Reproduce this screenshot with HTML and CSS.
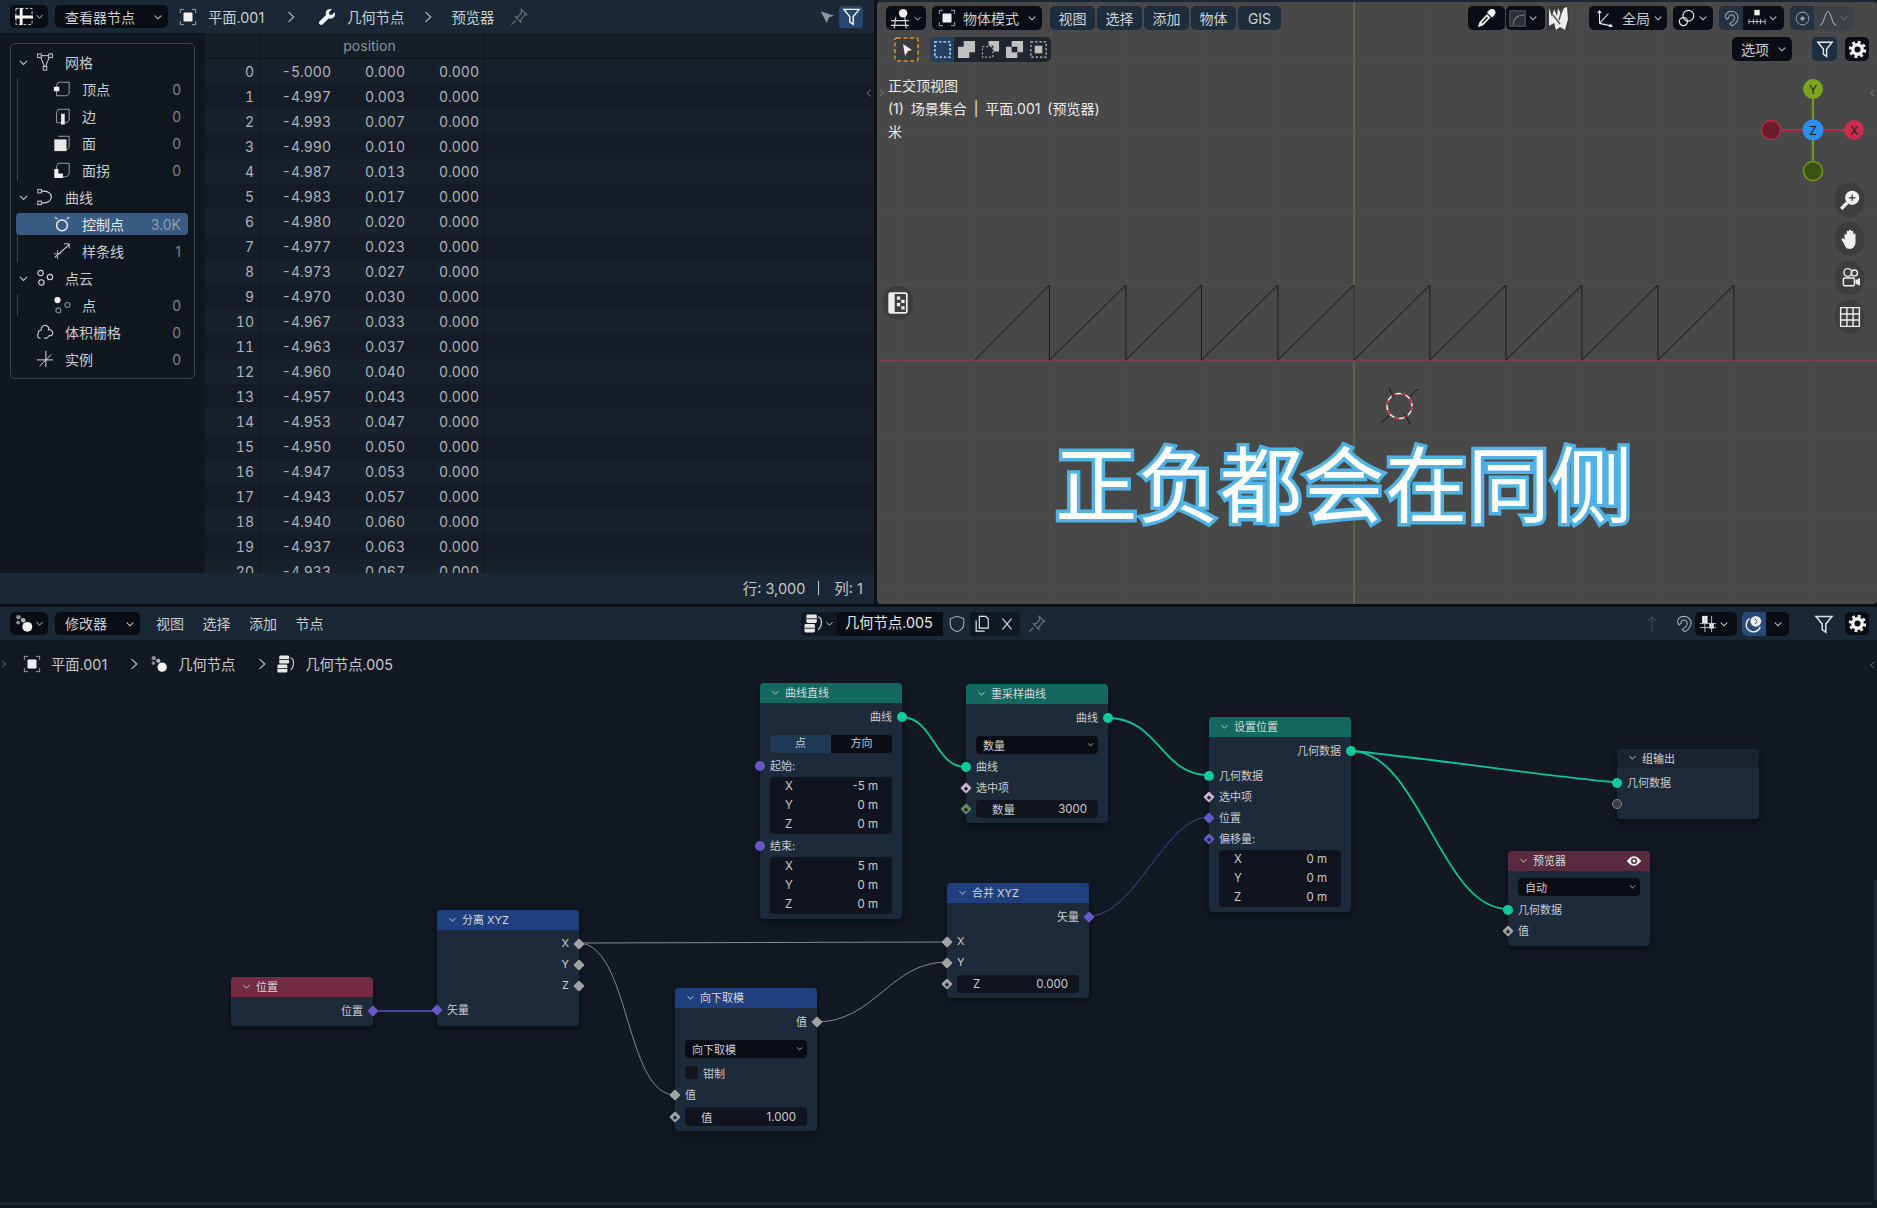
FILE: index.html
```html
<!doctype html>
<html lang="zh-CN">
<head>
  <meta charset="UTF-8" />
  <title>Geometry Nodes</title>
  <link rel="stylesheet" href="styles.css">
</head>
<body>
<svg class="defs" width="0" height="0" aria-hidden="true">
  <defs>
    <symbol id="i-chev" viewBox="0 0 20 20"><path d="M4.5 7.5l5.5 5.5 5.5-5.5" fill="none" stroke="currentColor" stroke-width="1.7"/></symbol>
    <symbol id="i-right" viewBox="0 0 20 20"><path d="M6.5 3l7.5 7-7.5 7" fill="none" stroke="currentColor" stroke-width="1.5"/></symbol>
    <symbol id="i-left" viewBox="0 0 20 20"><path d="M13.5 3L6 10l7.5 7" fill="none" stroke="currentColor" stroke-width="1.5"/></symbol>
    <symbol id="i-object" viewBox="0 0 20 20"><path d="M1.5 5.5v-4h4M14.5 1.5h4v4M18.5 14.5v4h-4M5.5 18.5h-4v-4" fill="none" stroke="#aeb3b8" stroke-width="1"/><rect x="5" y="5" width="10" height="10" rx="1" fill="#eceef0"/></symbol>
    <symbol id="i-wrench" viewBox="0 0 20 20"><path fill="#f0f0f0" d="M18.6 4.6l-3.3 3.2-2.6-.6-.6-2.6L15.4 1.4c-2.5-.8-5.2.1-6.3 2.3-.7 1.4-.7 2.9-.2 4.2L1.8 14.6c-1 1-1 2.5 0 3.5s2.5 1 3.5 0l6.9-6.6c1.4.5 3 .4 4.3-.4 2.2-1.3 3-4.1 2.1-6.5z"/></symbol>
    <symbol id="i-pin" viewBox="0 0 20 20"><path d="M12.5 1.5l6 6-2.5.5-3.5 4.5-.5 3.5-6-6 3.5-.5L13 5zM6 14l-4.5 4.5" fill="none" stroke="currentColor" stroke-width="1.2"/></symbol>
    <symbol id="i-filter" viewBox="0 0 20 20"><path d="M2 2.5h16l-6.2 7.6v8.2l-3.6-2.6v-5.6z" fill="none" stroke="currentColor" stroke-width="1.5"/></symbol>
    <symbol id="i-gear" viewBox="0 0 20 20"><circle cx="10" cy="10" r="5" fill="none" stroke="currentColor" stroke-width="3.6"/><circle cx="10" cy="10" r="7.6" fill="none" stroke="currentColor" stroke-width="3.2" stroke-dasharray="3 2.97"/></symbol>
    <symbol id="i-dots" viewBox="0 0 20 20"><circle cx="4.2" cy="3.5" r="2.4" fill="#8d9196"/><circle cx="9.2" cy="6.5" r="2.4" fill="#b5b8bc"/><circle cx="3.8" cy="9" r="2" fill="#8d9196"/><circle cx="13.5" cy="13.5" r="5.2" fill="#f0f0f0"/></symbol>
    <symbol id="i-group" viewBox="0 0 20 20"><rect x="2.500" y="0.500" width="11" height="9" rx="1.500" fill="#e8e8e8"/><rect x="0.500" y="10.500" width="11" height="9" rx="1.500" fill="#e8e8e8"/><path d="M2.500 5h11M0.500 15h11" stroke="#1a2533" stroke-width="1"/><path d="M15 3c4.500 1 4.500 10 0 13.500" fill="none" stroke="#d0d0d0" stroke-width="1.300"/></symbol>
    <symbol id="i-sheet" viewBox="0 0 20 20"><path d="M1.5 1.500h17v17h-17z" fill="none" stroke="#d5d5d5" stroke-width="1" stroke-dasharray="3 2"/><path d="M0.500 10.500h19M7 1v18" stroke="#f4f4f4" stroke-width="3"/></symbol>
    <symbol id="i-mesh" viewBox="0 0 20 20"><path d="M4.500 3h11L10 16.500z" fill="none" stroke="#d8dadc" stroke-width="1.100"/><g fill="#11171e" stroke="#d8dadc"><rect x="1.800" y="1" width="4" height="4"/><rect x="14.200" y="1" width="4" height="4"/><rect x="8" y="15" width="4" height="4"/></g></symbol>
    <symbol id="i-vert" viewBox="0 0 20 20"><path d="M6 2.500h12v11c0 2-2 4-4 4H4V6z" fill="none" stroke="#a8acb0"/><rect x="1" y="7.500" width="6" height="5" fill="#f0f0f0"/></symbol>
    <symbol id="i-edge" viewBox="0 0 20 20"><path d="M6 2.500h12v11c0 2-2 4-4 4H4V6z" fill="none" stroke="#a8acb0"/><rect x="9" y="7.500" width="4" height="12" fill="#f0f0f0"/></symbol>
    <symbol id="i-face" viewBox="0 0 20 20"><path d="M6 2.500h12v11c0 2-2 4-4 4" fill="none" stroke="#a8acb0"/><rect x="1.500" y="6" width="13.500" height="13" fill="#e8e8e8"/></symbol>
    <symbol id="i-corner" viewBox="0 0 20 20"><path d="M6 2.500h12v11c0 2-2 4-4 4H4V6z" fill="none" stroke="#a8acb0"/><path d="M1.500 9h4.500v5h5v5H1.500z" fill="#f0f0f0"/></symbol>
    <symbol id="i-curve" viewBox="0 0 20 20"><path d="M6 3.500h3c5 0 8 3 8 6.500s-3 6.500-8 6.500H6" fill="none" stroke="#d8dadc" stroke-width="1.200"/><g fill="#11171e" stroke="#d8dadc"><rect x="2" y="1.500" width="4" height="4"/><rect x="2" y="14.500" width="4" height="4"/></g></symbol>
    <symbol id="i-ctrl" viewBox="0 0 20 20"><circle cx="10" cy="11.500" r="6" fill="none" stroke="#eceef0" stroke-width="1.600"/><path d="M2 2.500l3 2M18 2.500l-3 2" stroke="#aeb4ba" stroke-width="1.800"/></symbol>
    <symbol id="i-spline" viewBox="0 0 20 20"><path d="M2 17L18 3" stroke="#d8dadc" stroke-width="1.200"/><path d="M12 2h6v5" fill="none" stroke="#d8dadc"/><path d="M5 9v10M1 13h8" stroke="#b0b4b8" stroke-width="1"/></symbol>
    <symbol id="i-cloud" viewBox="0 0 20 20"><g fill="none" stroke="#d8dadc" stroke-width="1.200"><circle cx="5" cy="4.500" r="3"/><circle cx="15.500" cy="9" r="3"/><circle cx="6" cy="15" r="3"/></g></symbol>
    <symbol id="i-point" viewBox="0 0 20 20"><circle cx="5" cy="4.500" r="3.500" fill="#f0f0f0"/><g fill="none" stroke="#8a8e92" stroke-width="1.200"><circle cx="16" cy="10" r="2.800"/><circle cx="6" cy="16" r="2.800"/></g></symbol>
    <symbol id="i-volume" viewBox="0 0 20 20"><path d="M5 17c-3 0-4-3-2.500-5C2 9 4 8 5.500 8 5.500 4 9 1.500 12 3c2 1 2.500 3 2 4.500 3-.5 5 1.500 4.500 4.500-.5 2-2.500 2.500-4 2-1 2.500-3.500 3.500-5.500 2.500" fill="none" stroke="#d8dadc" stroke-width="1.200"/></symbol>
    <symbol id="i-instance" viewBox="0 0 20 20"><path d="M11 1v18M1 11h18M4 18L17 5" fill="none" stroke="#d8dadc" stroke-width="1.100"/></symbol>
    <symbol id="i-view3d" viewBox="0 0 20 20"><circle cx="12.500" cy="5" r="4" fill="#f0f0f0"/><path d="M1 12h17M1 16.500h17M5.500 9L4 19.500M14 9l1.500 10.500" fill="none" stroke="#d8d8d8" stroke-width="1.100"/></symbol>
    <symbol id="i-dropper" viewBox="0 0 20 20"><path d="M11 3.500C13 .5 16 .5 17.500 2s1.500 4.500-1.500 6.500l-1 1-5-5z" fill="#f6f6f6"/><path d="M10 6.500L3 14l-1.500 4.500L6 17l7-7.500z" fill="#f0f0f0" stroke="#f6f6f6" stroke-width="0.800"/><path d="M10 8.500l-5 5.500-.6 1.500 1.500-.6 5-5z" fill="#1a1a1a"/></symbol>
    <symbol id="i-axes" viewBox="0 0 20 20"><path d="M5 16V2M5 16l14 3M5 16L15 5M3 4.500L5 2l2 2.500M16.500 16.500L19 19l-3.500 1" fill="none" stroke="#e8e8e8" stroke-width="1.200"/></symbol>
    <symbol id="i-pivot" viewBox="0 0 20 20"><g fill="none" stroke="#e8e8e8" stroke-width="1.300"><circle cx="11.500" cy="7.500" r="6"/><circle cx="6" cy="14" r="4.500"/></g></symbol>
    <symbol id="i-magnet" viewBox="0 0 20 20"><path d="M4.500 11L3 8.500C2 5.500 5 1.500 10 1.500c5 0 9 4.500 7.500 9.500-1 3-4 6.500-7 7.500L8 16c2-1 5-3.500 5.500-6C14 7.500 12 5.500 10 5.500 8 5.500 6.500 7 7 9z" fill="none" stroke="#a7adb3" stroke-width="1.200"/></symbol>
    <symbol id="i-snap" viewBox="0 0 20 20"><rect x="7" y="1" width="6" height="6" fill="#efefef"/><path d="M1 14h18M1 11v6M6 11v6M10 11v6M14 11v6M19 11v6" fill="none" stroke="#c8c8c8" stroke-width="1"/></symbol>
    <symbol id="i-snapcross" viewBox="0 0 20 20"><rect x="3.500" y="1" width="6" height="8" fill="#efefef"/><rect x="11.500" y="9" width="5" height="6" fill="#efefef"/><path d="M6.500 1v18M14 1v18M1 9.500h18M1 14h18" stroke="#c8c8c8" stroke-width="1"/></symbol>
    <symbol id="i-bell" viewBox="0 0 20 20"><path d="M1 18c5 0 5-15 9-15s4 15 9 15" fill="none" stroke="#a8acb0" stroke-width="1.200"/></symbol>
    <symbol id="i-ring" viewBox="0 0 20 20"><circle cx="10" cy="10" r="7.500" fill="none" stroke="#8a95a0" stroke-width="1.200"/><circle cx="10" cy="10" r="2.500" fill="#9ba5ae"/></symbol>
    <symbol id="i-overlay" viewBox="0 0 20 20"><path d="M5 4a8 8 0 1 0 12 9" fill="none" stroke="#eee" stroke-width="1.500"/><circle cx="12" cy="7" r="6" fill="#eee"/><path d="M10.500 4l3 3-2 3" stroke="#1c3a60" fill="none"/></symbol>
    <symbol id="i-up" viewBox="0 0 20 20"><path d="M10 19V2M5 7l5-5 5 5" fill="none" stroke="currentColor" stroke-width="1.200"/></symbol>
  </defs>
</svg>

<div class="app">
  <div class="top-row">

    <section class="sheet">
      <header class="bar">
        <button class="drop drop-type"><svg class="ic"><use href="#i-sheet"/></svg><svg class="chev"><use href="#i-chev"/></svg></button>
        <button class="drop drop-viewer"><span>查看器节点</span><svg class="chev"><use href="#i-chev"/></svg></button>
        <nav class="crumbs">
          <svg class="ic"><use href="#i-object"/></svg><span>平面.001</span>
          <svg class="arrow arrow-a"><use href="#i-right"/></svg>
          <svg class="ic"><use href="#i-wrench"/></svg><span>几何节点</span>
          <svg class="arrow arrow-b"><use href="#i-right"/></svg>
          <span>预览器</span>
          <svg class="ic pin"><use href="#i-pin"/></svg>
        </nav>
        <svg class="cursor-mini" viewBox="0 0 20 20"><path d="M1 3l18 6-7 2-3 8z" fill="#8d949b"/></svg>
        <button class="tool-filter"><svg class="ic"><use href="#i-filter"/></svg></button>
      </header>
      <div class="sheet-body">
        <aside class="side">
          <div class="panel">
            <div class="s-row s-top"><svg class="s-chev"><use href="#i-chev"/></svg><svg class="s-ic"><use href="#i-mesh"/></svg><span class="s-label">网格</span></div>
            <div class="kids">
              <div class="s-row s-sub"><svg class="s-ic"><use href="#i-vert"/></svg><span class="s-label">顶点</span><span class="s-n">0</span></div>
              <div class="s-row s-sub"><svg class="s-ic"><use href="#i-edge"/></svg><span class="s-label">边</span><span class="s-n">0</span></div>
              <div class="s-row s-sub"><svg class="s-ic"><use href="#i-face"/></svg><span class="s-label">面</span><span class="s-n">0</span></div>
              <div class="s-row s-sub"><svg class="s-ic"><use href="#i-corner"/></svg><span class="s-label">面拐</span><span class="s-n">0</span></div>
            </div>
            <div class="s-row s-top"><svg class="s-chev"><use href="#i-chev"/></svg><svg class="s-ic"><use href="#i-curve"/></svg><span class="s-label">曲线</span></div>
            <div class="kids">
              <div class="s-row s-sub active"><svg class="s-ic"><use href="#i-ctrl"/></svg><span class="s-label">控制点</span><span class="s-n">3.0K</span></div>
              <div class="s-row s-sub"><svg class="s-ic"><use href="#i-spline"/></svg><span class="s-label">样条线</span><span class="s-n">1</span></div>
            </div>
            <div class="s-row s-top"><svg class="s-chev"><use href="#i-chev"/></svg><svg class="s-ic"><use href="#i-cloud"/></svg><span class="s-label">点云</span></div>
            <div class="kids">
              <div class="s-row s-sub"><svg class="s-ic"><use href="#i-point"/></svg><span class="s-label">点</span><span class="s-n">0</span></div>
            </div>
            <div class="s-row s-top s-leaf"><svg class="s-ic"><use href="#i-volume"/></svg><span class="s-label">体积栅格</span><span class="s-n">0</span></div>
            <div class="s-row s-top s-leaf"><svg class="s-ic"><use href="#i-instance"/></svg><span class="s-label">实例</span><span class="s-n">0</span></div>
          </div>
        </aside>
        <div class="table">
          <div class="t-head"><span class="c-idx"></span><span class="c-pos">position</span></div>
          <div class="t-row"><span class="c-idx">0</span><span class="c-x">-5.000</span><span class="c-v">0.000</span><span class="c-v">0.000</span></div>
          <div class="t-row"><span class="c-idx">1</span><span class="c-x">-4.997</span><span class="c-v">0.003</span><span class="c-v">0.000</span></div>
          <div class="t-row"><span class="c-idx">2</span><span class="c-x">-4.993</span><span class="c-v">0.007</span><span class="c-v">0.000</span></div>
          <div class="t-row"><span class="c-idx">3</span><span class="c-x">-4.990</span><span class="c-v">0.010</span><span class="c-v">0.000</span></div>
          <div class="t-row"><span class="c-idx">4</span><span class="c-x">-4.987</span><span class="c-v">0.013</span><span class="c-v">0.000</span></div>
          <div class="t-row"><span class="c-idx">5</span><span class="c-x">-4.983</span><span class="c-v">0.017</span><span class="c-v">0.000</span></div>
          <div class="t-row"><span class="c-idx">6</span><span class="c-x">-4.980</span><span class="c-v">0.020</span><span class="c-v">0.000</span></div>
          <div class="t-row"><span class="c-idx">7</span><span class="c-x">-4.977</span><span class="c-v">0.023</span><span class="c-v">0.000</span></div>
          <div class="t-row"><span class="c-idx">8</span><span class="c-x">-4.973</span><span class="c-v">0.027</span><span class="c-v">0.000</span></div>
          <div class="t-row"><span class="c-idx">9</span><span class="c-x">-4.970</span><span class="c-v">0.030</span><span class="c-v">0.000</span></div>
          <div class="t-row"><span class="c-idx">10</span><span class="c-x">-4.967</span><span class="c-v">0.033</span><span class="c-v">0.000</span></div>
          <div class="t-row"><span class="c-idx">11</span><span class="c-x">-4.963</span><span class="c-v">0.037</span><span class="c-v">0.000</span></div>
          <div class="t-row"><span class="c-idx">12</span><span class="c-x">-4.960</span><span class="c-v">0.040</span><span class="c-v">0.000</span></div>
          <div class="t-row"><span class="c-idx">13</span><span class="c-x">-4.957</span><span class="c-v">0.043</span><span class="c-v">0.000</span></div>
          <div class="t-row"><span class="c-idx">14</span><span class="c-x">-4.953</span><span class="c-v">0.047</span><span class="c-v">0.000</span></div>
          <div class="t-row"><span class="c-idx">15</span><span class="c-x">-4.950</span><span class="c-v">0.050</span><span class="c-v">0.000</span></div>
          <div class="t-row"><span class="c-idx">16</span><span class="c-x">-4.947</span><span class="c-v">0.053</span><span class="c-v">0.000</span></div>
          <div class="t-row"><span class="c-idx">17</span><span class="c-x">-4.943</span><span class="c-v">0.057</span><span class="c-v">0.000</span></div>
          <div class="t-row"><span class="c-idx">18</span><span class="c-x">-4.940</span><span class="c-v">0.060</span><span class="c-v">0.000</span></div>
          <div class="t-row"><span class="c-idx">19</span><span class="c-x">-4.937</span><span class="c-v">0.063</span><span class="c-v">0.000</span></div>
          <div class="t-row"><span class="c-idx">20</span><span class="c-x">-4.933</span><span class="c-v">0.067</span><span class="c-v">0.000</span></div>
          <svg class="edge-arrow"><use href="#i-left"/></svg>
        </div>
      </div>
      <footer class="status"><span>行: 3,000</span><i class="status-sep"></i><span>列: 1</span></footer>
    </section>

    <section class="viewport">
      <!-- scene in page coordinates, axis lines and the curve -->
      <svg class="scene" viewBox="877 0 1000 604">
        <path d="M1354 0V604" stroke="#5e7d3c" stroke-width="1.200"/>
        <path d="M877 360.500H1877" stroke="#813a52" stroke-width="2"/>
        <path d="M975 360L1049.500 285V360L1126 285V360L1201.500 285V360L1278 285V360L1354 285V360L1430 285V360L1506 285V360L1582 285V360L1658 285V360L1734 285V360" fill="none" stroke="#161616" stroke-width="1"/>
        <ellipse cx="1399.500" cy="406" rx="12.500" ry="12.500" fill="none" stroke="#f2f2f2" stroke-width="1.500"/>
        <ellipse cx="1399.500" cy="406" rx="12.500" ry="12.500" fill="none" stroke="#c8242a" stroke-width="1.500" stroke-dasharray="5 5"/>
        <path d="M1389 388l5 10M1405 414l5 10M1389 416l-8 7M1410 396l8-7" stroke="#151515" stroke-width="1"/>
      </svg>

      <div class="v-tools">
        <div class="v-row">
          <button class="drop btn-type"><svg class="ic"><use href="#i-view3d"/></svg><svg class="chev"><use href="#i-chev"/></svg></button>
          <button class="drop btn-mode"><svg class="ic"><use href="#i-object"/></svg><span>物体模式</span><svg class="chev"><use href="#i-chev"/></svg></button>
          <div class="menus">
            <button class="menu">视图</button>
            <button class="menu">选择</button>
            <button class="menu">添加</button>
            <button class="menu">物体</button>
            <button class="menu">GIS</button>
          </div>
          <div class="v-right">
            <button class="drop btn-dropper"><svg class="ic"><use href="#i-dropper"/></svg></button>
            <button class="drop btn-curve"><svg class="ic ic-dim" viewBox="0 0 20 20"><rect x="1" y="1" width="18" height="18" fill="#2c2f33" stroke="#666a6e"/><path d="M5 18c0-8 5-12 13-12" fill="none" stroke="#808488" stroke-width="1.200"/></svg><svg class="chev"><use href="#i-chev"/></svg></button>
            <svg class="noise" viewBox="0 0 22 24"><rect width="22" height="24" fill="#3a3a3a"/><path d="M2 2l3 9 2-8 3 7 1-8 3 6 3-6 3-1 1 12-3 11-5-3-4 3-2-7-5 3z" fill="#eee"/><path d="M6 9l7 9M15 4l-3 10" stroke="#555" stroke-width="1.500"/></svg>
            <button class="drop btn-orient"><svg class="ic"><use href="#i-axes"/></svg><span>全局</span><svg class="chev"><use href="#i-chev"/></svg></button>
            <button class="drop btn-pivot"><svg class="ic"><use href="#i-pivot"/></svg><svg class="chev"><use href="#i-chev"/></svg></button>
            <div class="split">
              <button class="seg seg-soft"><svg class="ic"><use href="#i-magnet"/></svg></button>
              <button class="seg seg-dark"><svg class="ic"><use href="#i-snap"/></svg><svg class="chev"><use href="#i-chev"/></svg></button>
            </div>
            <div class="split">
              <button class="seg seg-soft"><svg class="ic"><use href="#i-ring"/></svg></button>
              <button class="seg seg-grey"><svg class="ic"><use href="#i-bell"/></svg><svg class="chev chev-dim"><use href="#i-chev"/></svg></button>
            </div>
          </div>
        </div>
        <div class="v-row v-row2">
          <svg class="tool-select" viewBox="0 0 25 25"><rect x="1" y="1" width="23" height="23" rx="2" fill="#3b3b3b" stroke="#d8952e" stroke-width="1.500" stroke-dasharray="4 2.500"/><path d="M9 7l9 6-4 1-3 5z" fill="#efefef"/></svg>
          <div class="modes">
            <span class="mode mode-on"><svg viewBox="0 0 20 20"><rect x="2" y="2" width="16" height="16" fill="none" stroke="#e8e8e8" stroke-width="1.500" stroke-dasharray="2.500 2"/></svg></span>
            <span class="mode"><svg viewBox="0 0 20 20"><path d="M7 1h12v12h-6v6H1V7h6z" fill="#c0c0c0"/></svg></span>
            <span class="mode"><svg viewBox="0 0 20 20"><path d="M8 1h11v11h-6V6H8z" fill="#c0c0c0"/><rect x="1.500" y="7" width="11" height="11" fill="none" stroke="#d0d0d0" stroke-dasharray="2 2"/></svg></span>
            <span class="mode"><svg viewBox="0 0 20 20"><path d="M7 1h12v12h-6V7H7zM1 7h6v6h6v6H1z" fill="#c0c0c0"/></svg></span>
            <span class="mode"><svg viewBox="0 0 20 20"><rect x="2" y="2" width="16" height="16" fill="none" stroke="#c8c8c8" stroke-width="1.200" stroke-dasharray="2.500 2"/><rect x="6" y="6" width="8" height="8" fill="#c0c0c0"/></svg></span>
          </div>
          <div class="v-right">
            <button class="drop btn-options"><span>选项</span><svg class="chev"><use href="#i-chev"/></svg></button>
            <button class="seg btn-vfilter"><svg class="ic"><use href="#i-filter"/></svg></button>
            <button class="drop btn-gear"><svg class="ic"><use href="#i-gear"/></svg></button>
          </div>
        </div>
      </div>

      <div class="v-info">
        <p>正交顶视图</p>
        <p>(1) 场景集合 | 平面.001 (预览器)</p>
        <p>米</p>
      </div>

      <svg class="v-edge v-edge-l"><use href="#i-right"/></svg>
      <svg class="v-edge v-edge-r"><use href="#i-left"/></svg>

      <span class="pill pill-left"><svg viewBox="0 0 20 20"><rect x="2" y="1" width="16" height="18" rx="1" fill="none" stroke="#eee" stroke-width="1.600"/><path d="M2 1h5v18H2z" fill="#eee"/><path d="M9 4h3v3H9zM13 7h3v3h-3zM9 10h3v3H9zM13 13h3v3h-3z" fill="#eee"/></svg></span>

      <svg class="gizmo" viewBox="0 0 110 130">
        <path d="M53 23V107" stroke="#6f9a1f" stroke-width="2.200"/>
        <path d="M11 64H95" stroke="#b32e48" stroke-width="2.200"/>
        <circle cx="53" cy="23" r="10" fill="#7aa51d"/>
        <circle cx="53" cy="105" r="9.500" fill="#3b5213" stroke="#6f9a1f" stroke-width="1.500"/>
        <circle cx="11" cy="64" r="9.500" fill="#6a1c2b" stroke="#b32e48" stroke-width="1.500"/>
        <circle cx="94" cy="64" r="10" fill="#c92c4d"/>
        <circle cx="53" cy="64" r="10.500" fill="#2c8ff0"/>
        <text x="53" y="28" class="gz">Y</text>
        <text x="94" y="69" class="gz">X</text>
        <text x="53" y="69" class="gz">Z</text>
      </svg>

      <div class="nav-pills">
        <span class="pill"><svg viewBox="0 0 20 20"><circle cx="12" cy="8" r="6.500" fill="#eee"/><path d="M12 5v6M9 8h6" stroke="#4a4a4a" stroke-width="1.300"/><path d="M7.500 12.500L2 18" stroke="#eee" stroke-width="3"/></svg></span>
        <span class="pill"><svg viewBox="0 0 20 20"><path d="M5 11V6.500a1 1 0 0 1 2 0V10V3.500a1 1 0 0 1 2 0V10V2.500a1 1 0 0 1 2 0V10V3.500a1 1 0 0 1 2 0V11V6a1 1 0 0 1 2 0v7c0 3-2 6-5 6s-4-1-5-4L2.500 11c-.5-1 .5-2 1.500-1.500z" fill="#eee"/></svg></span>
        <span class="pill"><svg viewBox="0 0 20 20"><g fill="none" stroke="#eee" stroke-width="1.300"><circle cx="8" cy="5" r="3.500"/><circle cx="14" cy="5.500" r="2.800"/><rect x="4" y="10" width="10" height="7" rx="1"/></g><path d="M15 12l4-2v7l-4-2z" fill="#eee"/></svg></span>
        <span class="pill"><svg viewBox="0 0 20 20"><path d="M1.500 1.500h17v17h-17zM1.500 7.200h17M1.500 12.800h17M7.200 1.500v17M12.800 1.500v17" fill="none" stroke="#eee" stroke-width="1.300"/></svg></span>
      </div>

      <div class="caption">正负都会在同侧</div>
    </section>
  </div>

  <section class="editor">
    <header class="bar nbar">
      <button class="drop drop-type"><svg class="ic"><use href="#i-dots"/></svg><svg class="chev"><use href="#i-chev"/></svg></button>
      <button class="drop drop-mod"><span>修改器</span><svg class="chev"><use href="#i-chev"/></svg></button>
      <span class="nmenu">
        <span>视图</span><span>选择</span><span>添加</span><span>节点</span>
      </span>
      <div class="datablock">
        <button class="db-type"><svg class="ic"><use href="#i-group"/></svg><svg class="chev"><use href="#i-chev"/></svg></button>
        <span class="db-name">几何节点.005</span>
        <button class="db-shield"><svg class="ic" viewBox="0 0 20 20"><path d="M10 1.500l7.500 2.500v6c0 4-3 7-7.500 8.500C5.500 17 2.500 14 2.500 10V4z" fill="none" stroke="#a6acb2" stroke-width="1.200"/></svg></button>
        <button class="db-copy"><svg class="ic" viewBox="0 0 20 20"><path d="M7 1.500h7l3 3v10H7z" fill="none" stroke="#e8e8e8" stroke-width="1.300"/><path d="M3.500 6v12H13" fill="none" stroke="#e8e8e8" stroke-width="1.300"/></svg></button>
        <button class="db-x"><svg class="ic" viewBox="0 0 20 20"><path d="M5 4l10 12M15 4L5 16" stroke="#d6d8da" stroke-width="1.300"/></svg></button>
      </div>
      <svg class="ic db-pin"><use href="#i-pin"/></svg>
      <div class="nbar-right">
        <svg class="ic up-dim"><use href="#i-up"/></svg>
        <svg class="ic magnet-small"><use href="#i-magnet"/></svg>
        <button class="drop btn-snapn"><svg class="ic"><use href="#i-snapcross"/></svg><svg class="chev"><use href="#i-chev"/></svg></button>
        <div class="split split-ov">
          <button class="seg seg-blue"><svg class="ic"><use href="#i-overlay"/></svg></button>
          <button class="seg seg-dark seg-dark-n"><svg class="chev"><use href="#i-chev"/></svg></button>
        </div>
        <svg class="ic filter-n"><use href="#i-filter"/></svg>
        <button class="drop btn-gear"><svg class="ic"><use href="#i-gear"/></svg></button>
      </div>
    </header>

    <div class="graph">
      <nav class="crumbs ncrumbs">
        <svg class="arrow arrow-edge"><use href="#i-right"/></svg>
        <svg class="ic"><use href="#i-object"/></svg><span>平面.001</span>
        <svg class="arrow arrow-c"><use href="#i-right"/></svg>
        <svg class="ic"><use href="#i-dots"/></svg><span>几何节点</span>
        <svg class="arrow arrow-d"><use href="#i-right"/></svg>
        <svg class="ic"><use href="#i-group"/></svg><span>几何节点.005</span>
      </nav>
      <svg class="v-edge graph-edge"><use href="#i-left"/></svg>

      <svg class="links" viewBox="0 640 1877 568">
        <g fill="none" stroke="#10c49a" stroke-width="1.800">
          <path d="M901 717C934 717 934 767 966 767"/>
          <path d="M1107 718C1160 718 1160 775 1209 775"/>
          <path d="M1351 751C1380 752 1590 782 1616 782"/>
          <path d="M1351 751C1420 751 1440 909 1508 909"/>
        </g>
        <g fill="none" stroke="#4a4296">
          <path d="M373 1011H436" stroke-width="1.800"/>
          <path d="M1089 916C1135 916 1165 817 1209 817" stroke-width="1"/>
        </g>
        <g fill="none" stroke="#85898d">
          <path d="M578 943L947 942" stroke-width="1.200"/>
          <path d="M578 943C630 943 625 1095 675 1095" stroke-width="1"/>
          <path d="M816 1022C875 1022 890 962 947 962" stroke-width="1"/>
        </g>
      </svg>

      <article class="node n-line">
        <h4 class="n-head teal"><svg class="n-chev"><use href="#i-chev"/></svg>曲线直线</h4>
        <div class="n-body">
          <div class="n-row out">曲线<i class="sock green"></i></div>
          <div class="toggle"><span class="toggle-on">点</span><span>方向</span></div>
          <div class="n-row">起始:<i class="sock violet"></i></div>
          <div class="vec"><div><span>X</span><span>-5 m</span></div><div><span>Y</span><span>0 m</span></div><div><span>Z</span><span>0 m</span></div></div>
          <div class="n-row after-vec">结束:<i class="sock violet"></i></div>
          <div class="vec"><div><span>X</span><span>5 m</span></div><div><span>Y</span><span>0 m</span></div><div><span>Z</span><span>0 m</span></div></div>
        </div>
      </article>

      <article class="node n-resample">
        <h4 class="n-head teal"><svg class="n-chev"><use href="#i-chev"/></svg>重采样曲线</h4>
        <div class="n-body">
          <div class="n-row out">曲线<i class="sock green"></i></div>
          <div class="select">数量<svg class="chev"><use href="#i-chev"/></svg></div>
          <div class="n-row after-select">曲线<i class="sock green"></i></div>
          <div class="n-row">选中项<i class="sock dia pink dot"></i></div>
          <div class="field">数量<span>3000</span><i class="sock dia olive dot"></i></div>
        </div>
      </article>

      <article class="node n-setpos">
        <h4 class="n-head teal"><svg class="n-chev"><use href="#i-chev"/></svg>设置位置</h4>
        <div class="n-body">
          <div class="n-row out">几何数据<i class="sock green"></i></div>
          <div class="n-row spaced">几何数据<i class="sock green"></i></div>
          <div class="n-row">选中项<i class="sock dia pink dot"></i></div>
          <div class="n-row">位置<i class="sock dia purple"></i></div>
          <div class="n-row">偏移量:<i class="sock dia purple dot"></i></div>
          <div class="vec"><div><span>X</span><span>0 m</span></div><div><span>Y</span><span>0 m</span></div><div><span>Z</span><span>0 m</span></div></div>
        </div>
      </article>

      <article class="node n-output">
        <h4 class="n-head slate"><svg class="n-chev"><use href="#i-chev"/></svg>组输出</h4>
        <div class="n-body">
          <div class="n-row">几何数据<i class="sock green"></i></div>
          <div class="n-row"><i class="sock empty"></i></div>
        </div>
      </article>

      <article class="node n-preview">
        <h4 class="n-head wine"><svg class="n-chev"><use href="#i-chev"/></svg>预览器<svg class="n-eye" viewBox="0 0 20 14"><path d="M1 7c3-4 6-6 9-6s6 2 9 6c-3 4-6 6-9 6s-6-2-9-6z" fill="#eee"/><circle cx="10" cy="7" r="3.800" fill="#5a2a3e"/><circle cx="10" cy="7" r="1.800" fill="#eee"/></svg></h4>
        <div class="n-body">
          <div class="select sel-first">自动<svg class="chev"><use href="#i-chev"/></svg></div>
          <div class="n-row after-select-b">几何数据<i class="sock green"></i></div>
          <div class="n-row">值<i class="sock dia grey dot"></i></div>
        </div>
      </article>

      <article class="node n-position">
        <h4 class="n-head rose"><svg class="n-chev"><use href="#i-chev"/></svg>位置</h4>
        <div class="n-body">
          <div class="n-row out">位置<i class="sock dia purple"></i></div>
        </div>
      </article>

      <article class="node n-split">
        <h4 class="n-head blue"><svg class="n-chev"><use href="#i-chev"/></svg>分离 XYZ</h4>
        <div class="n-body split-body">
          <div class="n-row out">X<i class="sock dia grey"></i></div>
          <div class="n-row out">Y<i class="sock dia grey"></i></div>
          <div class="n-row out">Z<i class="sock dia grey"></i></div>
          <div class="n-row spaced-sm">矢量<i class="sock dia purple"></i></div>
        </div>
      </article>

      <article class="node n-floor">
        <h4 class="n-head blue"><svg class="n-chev"><use href="#i-chev"/></svg>向下取模</h4>
        <div class="n-body">
          <div class="n-row out">值<i class="sock dia grey"></i></div>
          <div class="select">向下取模<svg class="chev"><use href="#i-chev"/></svg></div>
          <div class="n-row check-row"><i class="check"></i>钳制</div>
          <div class="n-row">值<i class="sock dia grey"></i></div>
          <div class="field field-tall">值<span>1.000</span><i class="sock dia grey dot"></i></div>
        </div>
      </article>

      <article class="node n-combine">
        <h4 class="n-head blue"><svg class="n-chev"><use href="#i-chev"/></svg>合并 XYZ</h4>
        <div class="n-body">
          <div class="n-row out">矢量<i class="sock dia purple"></i></div>
          <div class="n-row spaced">X<i class="sock dia grey"></i></div>
          <div class="n-row">Y<i class="sock dia grey"></i></div>
          <div class="field">Z<span>0.000</span><i class="sock dia grey dot"></i></div>
        </div>
      </article>

      <div class="scroll-v"></div>
      <div class="scroll-h"></div>
    </div>
  </section>
</div>
</body>
</html>
```

FILE: styles.css
```css
:root {
  --gap-bg: #0b1016;
  --bar-bg: #1a2835;
  --side-bg: #11171e;
  --table-bg: #151c27;
  --table-alt: #18202b;
  --graph-bg: #121923;
  --node-bg: #1c2a3a;
  --ctl-bg: #0a0e14;
  --txt: #c9cdd1;
  --txt-dim: #7e848b;
  --font: Inter, "Noto Sans CJK SC", sans-serif;
}
* { box-sizing: border-box; }
html, body { margin: 0; padding: 0; width: 100%; height: 100%; overflow: hidden; background: var(--gap-bg); color: var(--txt); font-family: var(--font); font-size: 14px; }
button { font: inherit; color: inherit; border: none; padding: 0; background: none; display: flex; align-items: center; white-space: nowrap; }
p, h4 { margin: 0; font-weight: 400; }
.defs { position: absolute; }
.ic { width: 18px; height: 18px; flex: none; display: block; }
.chev { width: 12px; height: 12px; flex: none; color: #d5d7da; }
.arrow { width: 14px; height: 16px; flex: none; color: #c0c4c8; }

.app { display: flex; flex-direction: column; height: 100vh; gap: 3px; }
.top-row { display: flex; height: 604px; flex: none; gap: 3px; }

/* shared header */
.bar { display: flex; align-items: center; height: 33px; padding-left: 10px; background: var(--bar-bg); flex: none; }
.drop { background: var(--ctl-bg); border-radius: 5px; height: 23px; }
.drop-type { width: 38px; padding-left: 4px; }
.drop-type .ic { width: 20px; height: 19px; }
.drop-type .chev { width: 11px; height: 11px; }
.drop-viewer { width: 113px; margin-left: 7px; padding: 0 4px 0 10px; justify-content: space-between; }
.crumbs { display: flex; align-items: center; font-size: 14.300px; white-space: nowrap; }
.bar .crumbs { margin-left: 11px; }
.bar .crumbs .ic { margin-right: 11px; }
.arrow-a { margin: 0 20px 0 20px; }
.arrow-b { margin: 0 16px 0 17px; }
.pin { color: #6e757c; margin-left: 16px; margin-right: 0 !important; }
.cursor-mini { width: 15px; height: 15px; margin-left: auto; }
.tool-filter { width: 24px; height: 22px; background: #284770; border-radius: 3px; justify-content: center; margin: 0 11px 0 4px; color: #f2f2f2; }
.tool-filter .ic { width: 19px; height: 19px; }

/* spreadsheet */
.sheet { width: 874px; flex: none; display: flex; flex-direction: column; }
.sheet-body { flex: 1; display: flex; min-height: 0; }
.side { width: 205px; flex: none; background: var(--side-bg); padding: 10px 10px 0; }
.panel { width: 185px; height: 336px; border: 1px solid #39414b; border-radius: 5px; padding-top: 7px; }
.s-row { position: relative; display: flex; align-items: center; height: 22px; margin: 5px 6px 5px 5px; padding-right: 7px; }
.panel > .s-row:first-child { margin-top: 0; }
.s-chev { width: 13px; height: 13px; margin-left: 1px; flex: none; color: #c0c4c8; }
.s-ic { width: 18px; height: 18px; flex: none; }
.s-top .s-ic { margin-left: 6px; }
.s-top .s-label { margin-left: 11px; }
.s-leaf { padding-left: 14px; }
.s-sub { padding-left: 37px; }
.s-sub .s-label { margin-left: 11px; }
.s-label { color: var(--txt); }
.s-n { margin-left: auto; color: var(--txt-dim); }
.active { background: #3a5c84; border-radius: 4px; }
.active .s-n { color: #8d9dae; }
.active .s-label { color: #e4e8ec; }
.kids { position: relative; }
.kids::before { content: ""; position: absolute; left: 6px; top: 0; bottom: 0; width: 1px; background: #3a424c; }

.table { position: relative; flex: 1; overflow: hidden; background: var(--table-bg); font-size: 14px; font-variant-numeric: tabular-nums; }
.t-head { display: flex; height: 26px; border-bottom: 1px solid #0f141b; color: #8d939a; background: #161e28; }
.t-head .c-idx { line-height: 26px; }
.c-pos { width: 224px; text-align: center; line-height: 25px; padding-right: 4px; border-right: 1px solid #0f141b; }
.t-row { display: flex; height: 25px; align-items: center; color: #aeb3b8; }
.t-row:nth-child(even) { background: var(--table-alt); }
.c-idx { width: 55px; text-align: right; padding-right: 5px; border-right: 1px solid #0f141b; height: 100%; line-height: 25px; }
.c-x { width: 71px; text-align: right; }
.c-v { width: 74px; text-align: right; }
.t-row .c-v:last-child { position: relative; }
.t-row .c-v:last-child::after { content: ""; position: absolute; left: 79px; top: -6px; height: 25px; width: 1px; background: #0f141b; }
.edge-arrow { position: absolute; right: 0; top: 52px; width: 10px; height: 16px; color: #8a9098; }

.status { height: 31px; flex: none; background: var(--bar-bg); display: flex; align-items: center; justify-content: flex-end; padding: 0 11px 2px 0; color: #c4c8cc; font-size: 14.500px; }
.status-sep { width: 1px; height: 14px; background: #c4c8cc; margin: 0 15px 0 13px; }

/* 3d viewport */
.viewport {
  position: relative; flex: 1; overflow: hidden; border-radius: 4px; border-top: 2px solid var(--bar-bg);
  background-color: #484848;
  background-image: linear-gradient(#4e4e4e 1px, transparent 1px), linear-gradient(90deg, #4e4e4e 1px, transparent 1px);
  background-size: 76px 76px;
  background-position: 21px 54px;
}
.scene { position: absolute; left: 0; top: -2px; width: 1000px; height: 604px; }
.v-tools { position: relative; padding: 4px 22px 0 9px; display: flex; flex-direction: column; gap: 7px; }
.v-row { display: flex; height: 24px; align-items: center; }
.v-row2 { padding-left: 8px; padding-right: 0; margin-right: -14px; }
.v-right { display: flex; align-items: center; margin-left: auto; gap: 6px; }
.v-tools .drop { height: 24px; }
.btn-type { width: 40px; padding-left: 4px; gap: 1px; }
.btn-type .ic { width: 21px; height: 21px; }
.btn-type .chev { width: 11px; height: 11px; }
.btn-mode { width: 110px; margin-left: 6px; padding: 0 4px 0 6px; gap: 7px; }
.btn-mode .chev { margin-left: auto; }
.menus { display: flex; gap: 2px; margin-left: 8px; }
.menu { height: 24px; width: 45px; justify-content: center; background: #1d2d3c; border-radius: 5px; color: #cfd3d7; }
.menu:last-child { width: 43px; }
.btn-dropper { width: 37px; justify-content: center; margin-right: -5px; }
.btn-dropper .ic { width: 20px; height: 20px; }
.btn-curve { width: 39px; padding-left: 3px; margin-right: -4px; gap: 1px; }
.ic-dim { width: 17px; height: 17px; }
.noise { width: 22px; height: 24px; margin-right: 14px; }
.btn-orient { width: 78px; padding: 0 3px 0 6px; }
.btn-orient span { margin-left: 9px; margin-right: 2px; flex: none; }
.btn-pivot { width: 40px; padding-left: 5px; gap: 1px; }
.split { display: flex; }
.seg { height: 24px; justify-content: center; }
.seg-soft { width: 24px; background: #243242; border-radius: 5px 0 0 5px; }
.seg-dark { width: 41px; background: var(--ctl-bg); border-radius: 0 5px 5px 0; gap: 1px; }
.seg-grey { width: 41px; background: #3e4245; border-radius: 0 5px 5px 0; gap: 1px; }
.chev-dim { color: #71757a; }
.seg-soft .ic { width: 17px; height: 17px; }
.tool-select { width: 25px; height: 25px; flex: none; }
.modes { display: flex; margin-left: 11px; height: 25px; width: 121px; background: #1f252c; border-radius: 5px; overflow: hidden; }
.mode { width: 24.200px; display: flex; align-items: center; justify-content: center; }
.mode svg { width: 19px; height: 19px; }
.mode-on { background: #22405f; }
.btn-options { width: 60px; padding: 0 4px 0 9px; justify-content: space-between; }
.btn-vfilter { width: 25px; background: #1e2e42; border-radius: 5px; margin-left: 14px; margin-right: 2px; color: #eee; }
.btn-gear { width: 24px; justify-content: center; color: #f0f0f0; }
.btn-gear .ic { width: 19px; height: 19px; }

.v-info { position: absolute; left: 11px; top: 72px; color: #ebebeb; font-size: 14px; line-height: 23px; word-spacing: 3px; }
.v-edge { position: absolute; width: 9px; height: 14px; color: #8d9298; }
.v-edge-l { left: 0; top: 84px; }
.v-edge-r { right: 0; top: 84px; }
.pill { display: flex; align-items: center; justify-content: center; width: 30px; height: 34px; border-radius: 15px; background: #3c3d3f; }
.pill svg { width: 22px; height: 22px; }
.pill-left { position: absolute; left: 6px; top: 284px; }
.gizmo { position: absolute; left: 883px; top: 64px; width: 110px; height: 130px; }
.gz { font: 12px Inter, sans-serif; fill: #1c1c1c; text-anchor: middle; }
.nav-pills { position: absolute; left: 958px; top: 181px; display: flex; flex-direction: column; gap: 5px; }
.nav-pills .pill { width: 29px; }
.caption {
  position: absolute; left: 178px; top: 421px; white-space: nowrap;
  font-family: "Noto Sans CJK SC", sans-serif; font-size: 82.500px; line-height: 115px; font-weight: 400;
  color: #fff; -webkit-text-stroke: 7px #50b3e4; paint-order: stroke fill;
}

/* node editor */
.editor { flex: 1; min-height: 0; display: flex; flex-direction: column; }
.nbar { padding-left: 10px; }
.nbar .drop-mod span, .nmenu > span { padding-bottom: 2px; }
.drop-mod { width: 85px; margin-left: 7px; padding: 0 4px 0 10px; justify-content: space-between; }
.nmenu { display: flex; gap: 18.500px; margin-left: 16px; color: #c6cacd; }
.datablock { display: flex; align-items: center; height: 24px; margin-left: 477.500px; background: #101923; border-radius: 5px; }
.db-type { width: 36px; height: 24px; gap: 1px; padding-left: 3px; }
.db-type .ic { width: 19px; height: 19px; }
.db-type .chev { width: 11px; height: 11px; }
.db-name { width: 106px; height: 24px; line-height: 22px; padding-left: 8px; background: var(--ctl-bg); color: #e8eaec; font-size: 14.300px; white-space: nowrap; }
.db-shield { width: 27px; height: 24px; justify-content: center; background: var(--bar-bg); }
.db-copy { width: 24px; height: 24px; justify-content: center; }
.db-x { width: 26px; height: 24px; justify-content: center; }
.db-pin { margin-left: 8px; color: #70767d; }
.nbar-right { margin-left: auto; display: flex; align-items: center; padding-right: 8px; }
.up-dim { color: #3e4a56; }
.magnet-small { margin-left: 14px; }
.btn-snapn { width: 42px; padding-left: 4px; gap: 1px; margin-left: 2px; height: 24px; }
.split-ov { margin-left: 5px; }
.seg-blue { width: 24px; background: #284a78; border-radius: 5px 0 0 5px; }
.seg-dark-n { width: 23px; }
.filter-n { margin-left: 25px; width: 20px; height: 20px; color: #dfe2e5; }
.nbar .btn-gear { margin-left: 11px; }

.graph { position: relative; flex: 1; background: var(--graph-bg); overflow: hidden; }
.ncrumbs { height: 47px; color: #c6cacd; }
.ncrumbs .ic { margin-right: 10px; }
.arrow-edge { width: 8px; margin-right: 15px; }
.arrow-c { margin: 0 9px 0 20px; }
.arrow-d { margin: 0 8px 0 20px; }
.graph-edge { right: 0; top: 18px; }
.links { position: absolute; left: 0; top: 0; width: 1877px; height: 568px; }
.scroll-v { position: absolute; right: 0; top: 240px; bottom: 8px; width: 3px; background: #1e2732; }
.scroll-h { position: absolute; left: 0; right: 6px; bottom: 3px; height: 3px; background: #1e2732; }

.node { position: absolute; width: 142px; background: var(--node-bg); border-radius: 4px; box-shadow: 0 3px 9px rgba(0, 0, 0, 0.5); font-size: 11px; color: var(--txt); }
.n-line { left: 760px; top: 43px; }
.n-resample { left: 966px; top: 44px; }
.n-setpos { left: 1209px; top: 77px; }
.n-output { left: 1617px; top: 109px; }
.n-preview { left: 1508px; top: 211px; }
.n-position { left: 231px; top: 337px; }
.n-split { left: 437px; top: 270px; }
.n-floor { left: 675px; top: 348px; }
.n-combine { left: 947px; top: 243px; }

.n-head { position: relative; display: flex; align-items: center; height: 20px; padding: 0 0 2px 10px; border-radius: 4px 4px 0 0; font-size: 11px; color: #d5d9dc; }
.n-chev { width: 11px; height: 11px; margin-right: 4px; color: #cfd3d6; }
.n-eye { position: absolute; right: 8px; top: 4px; width: 16px; height: 12px; }
.teal { background: #13695f; }
.slate { background: #1a2330; border-bottom: 1px solid #232e3b; }
.wine { background: #5a2a3e; }
.rose { background: #712b42; }
.blue { background: #1f3f7f; }

.n-body { display: flex; flex-direction: column; padding: 3px 10px 5px; }
.n-row { position: relative; display: flex; align-items: center; height: 21px; padding-bottom: 2px; flex: none; }
.out { justify-content: flex-end; }
.sock { position: absolute; left: -15px; top: 50%; width: 10px; height: 10px; margin-top: -5px; border-radius: 50%; }
.out .sock { left: auto; right: -15px; }
.dia { width: 8px; height: 8px; margin-top: -4px; left: -14px; border-radius: 1px; transform: rotate(45deg); }
.out .dia { right: -14px; }
.green { background: #10c99c; }
.violet { background: #6657c4; }
.purple { background: #6659c6; }
.pink { background: #cdb2d2; }
.olive { background: #628a5e; }
.grey { background: #a0a2a4; }
.empty { background: #3d3f42; border: 1px solid #85888b; }
.dot::after { content: ""; position: absolute; left: 2.500px; top: 2.500px; width: 3px; height: 3px; background: #18202b; }

.toggle { display: flex; height: 18px; margin-top: 8px; margin-bottom: 2px; background: var(--ctl-bg); border-radius: 4px; overflow: hidden; }
.toggle span { flex: 1; text-align: center; line-height: 17px; }
.toggle .toggle-on { background: #1f3a55; }
.vec { margin-top: 1px; height: 57px; flex: none; background: #10141f; border-radius: 4px; padding: 0 14px 0 15px; font-size: 11.500px; }
.vec div { display: flex; justify-content: space-between; height: 19px; line-height: 19px; }
.after-vec { margin-top: 1px; }
.select { position: relative; display: flex; align-items: center; justify-content: space-between; height: 18px; flex: none; margin-top: 8px; padding: 0 3px 1px 7px; background: var(--ctl-bg); border-radius: 4px; }
.select .chev { width: 9px; height: 9px; }
.sel-first { margin-top: 4px; }
.after-select { margin-top: 2px; }
.after-select-b { margin-top: 3px; }
.field { position: relative; display: flex; align-items: center; justify-content: space-between; height: 18px; flex: none; margin-top: 2px; padding: 0 11px 0 16px; background: #10141f; border-radius: 4px; font-size: 11.500px; }
.field-tall { height: 19px; }
.field .sock { left: -14px; }
.spaced { margin-top: 4px; }
.spaced-sm { margin-top: 3px; }
.split-body { padding-bottom: 6px; }
.check-row { margin-top: 5px; gap: 5px; }
.check { width: 13px; height: 13px; background: #12161c; border-radius: 2px; flex: none; }
```
